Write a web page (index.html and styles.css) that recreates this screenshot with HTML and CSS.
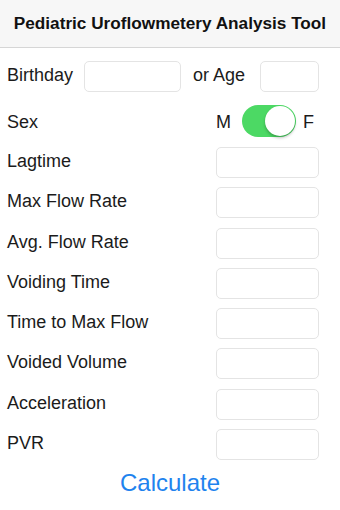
FILE: index.html
```html
<!DOCTYPE html>
<html>
<head>
<meta charset="utf-8">
<link rel="stylesheet" href="styles.css">
</head>
<body>
<div class="header"><span class="title">Pediatric Uroflowmetery Analysis Tool</span></div>
<div class="form">
  <div class="row first">
    <span class="label bday">Birthday</span>
    <span class="box box-bday"></span>
    <span class="label orage">or Age</span>
    <span class="box box-age"></span>
  </div>
  <div class="row sex">
    <span class="label">Sex</span>
    <div class="sexgroup">
      <span class="label">M</span>
      <span class="toggle"><span class="knob"></span></span>
      <span class="label">F</span>
    </div>
  </div>
  <div class="fields">
    <div class="row"><span class="label">Lagtime</span><span class="box"></span></div>
    <div class="row"><span class="label">Max Flow Rate</span><span class="box"></span></div>
    <div class="row"><span class="label">Avg. Flow Rate</span><span class="box"></span></div>
    <div class="row"><span class="label">Voiding Time</span><span class="box"></span></div>
    <div class="row"><span class="label">Time to Max Flow</span><span class="box"></span></div>
    <div class="row"><span class="label">Voided Volume</span><span class="box"></span></div>
    <div class="row"><span class="label">Acceleration</span><span class="box"></span></div>
    <div class="row"><span class="label">PVR</span><span class="box"></span></div>
  </div>
  <div class="calc">Calculate</div>
</div>
</body>
</html>
```
FILE: styles.css
```css
html, body {
  margin: 0;
  padding: 0;
  background: #ffffff;
}
body {
  width: 340px;
  font-family: "Liberation Sans", Arial, sans-serif;
  color: #1b1b1b;
}
.header {
  height: 47px;
  background: #f7f7f7;
  border-bottom: 1px solid #d6d6d6;
  display: flex;
  align-items: center;
  justify-content: center;
}
.title {
  font-size: 17.2px;
  font-weight: bold;
  color: #111;
  padding-bottom: 1px;
}
.form {
  padding: 13px 21px 0 7px;
}
.row {
  display: flex;
  align-items: center;
  justify-content: space-between;
  height: 31px;
}
.label {
  font-size: 18px;
  padding-bottom: 2px;
}
.box {
  width: 101px;
  height: 29px;
  border: 1px solid #e4e4e4;
  border-radius: 5px;
  background: #fff;
}
.row.first {
  justify-content: flex-start;
}
.bday {
  width: 77px;
}
.box-bday {
  width: 95px;
}
.orage {
  margin-left: 12px;
  width: 67px;
}
.box-age {
  width: 57px;
}
.row.sex {
  height: 32px;
  margin-top: 13px;
}
.row.sex .label {
  padding-bottom: 0;
  padding-top: 2px;
}
.sexgroup {
  display: flex;
  align-items: center;
  margin-right: 5px;
}
.toggle {
  width: 54px;
  height: 32px;
  border-radius: 16px;
  background: #4cd964;
  margin: 0 7px 0 11px;
  display: flex;
  justify-content: flex-end;
  align-items: center;
  padding-right: 1px;
  box-sizing: border-box;
}
.knob {
  width: 30px;
  height: 30px;
  border-radius: 50%;
  background: #fff;
  box-shadow: 0 2px 3px rgba(0,0,0,0.25);
}
.fields {
  margin-top: 10px;
  display: flex;
  flex-direction: column;
  gap: 9.3px;
}
.calc {
  text-align: center;
  font-size: 24px;
  color: #1f83ee;
  margin-top: 9px;
  margin-right: -14px;
}
```
